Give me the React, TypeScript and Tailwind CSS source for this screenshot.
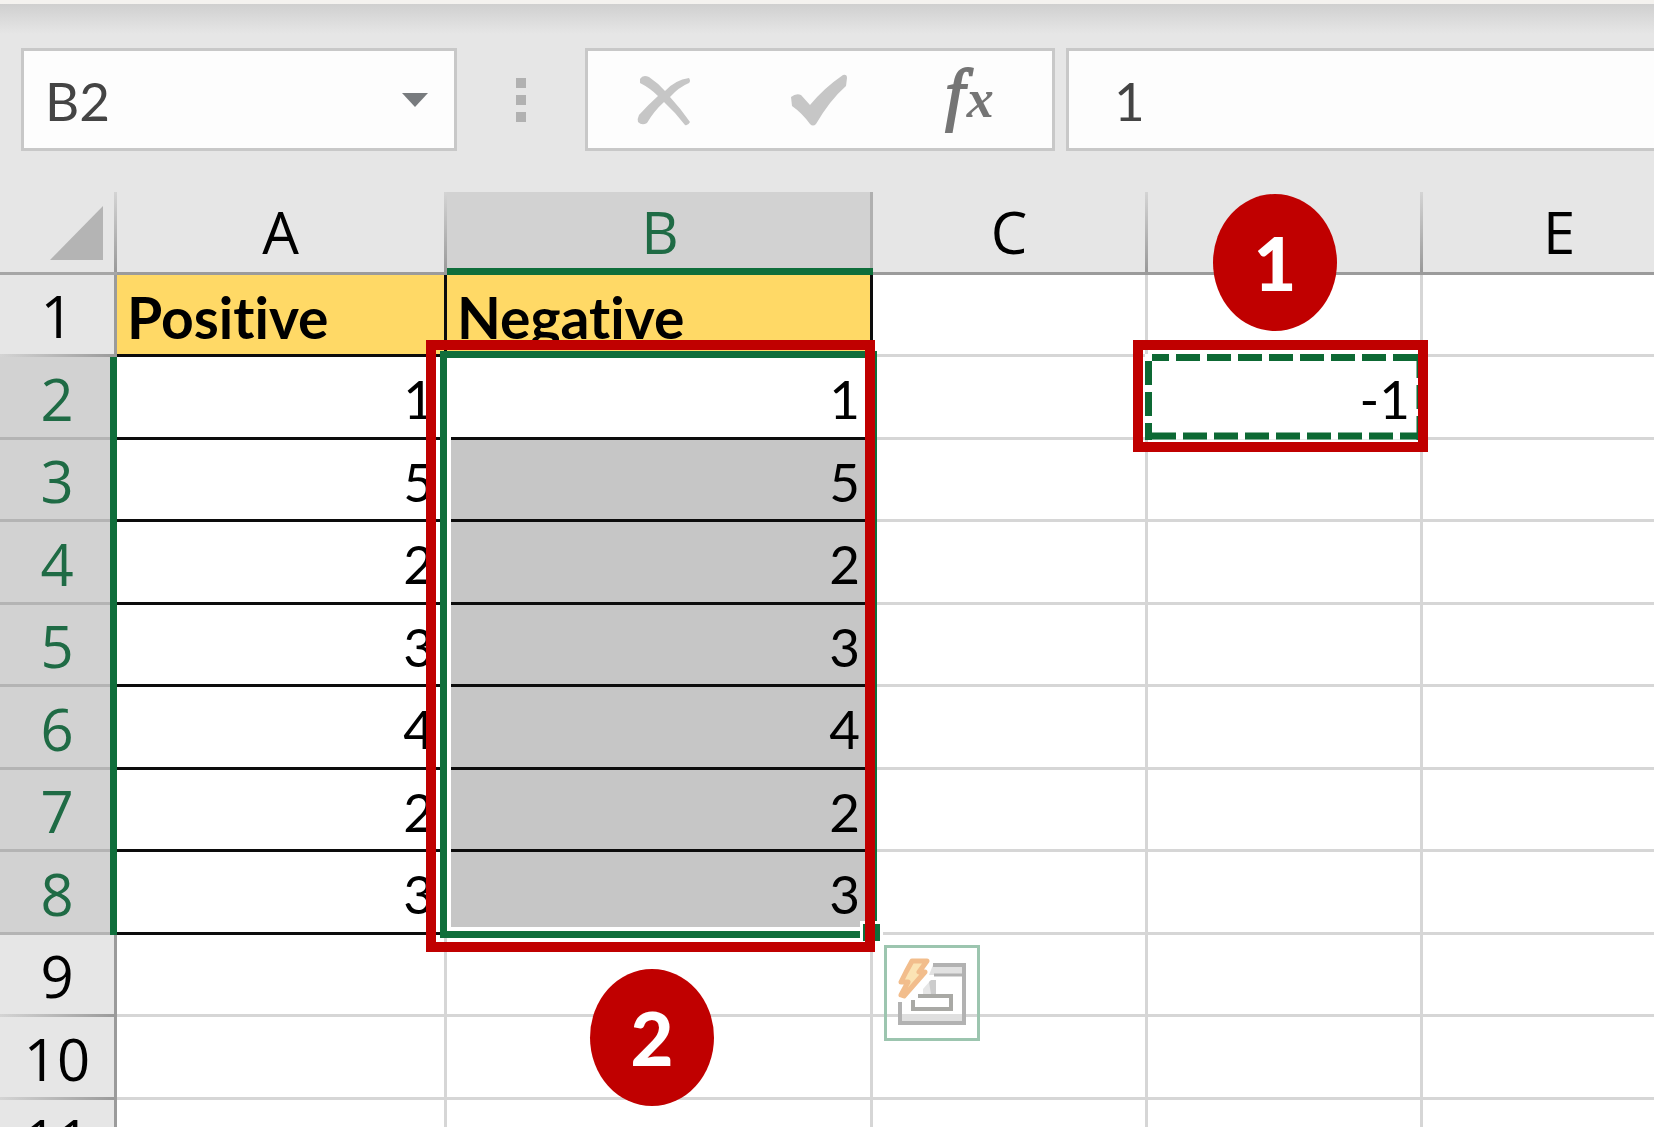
import clsx from "clsx";

const columns = ["A", "B", "C", "D", "E"];
const positive = [1, 5, 2, 3, 4, 2, 3];
const rows = Array.from({ length: 10 }, (_, i) => i + 1);

const isSelected = (row: number) => row >= 2 && row <= 8;

const FormulaBar = () => {
  return (
    <form className="flex h-[188px] bg-[linear-gradient(#cfcfcf,#dadada_14px,#e6e6e6_30px)] pt-[44px] pb-[41px] pl-[21px] font-[Lato,sans-serif] text-[53px] text-[#444]">
      <div className="flex w-[436px] shrink-0 items-center border-[3px] border-[#c8c8c8] bg-[#fdfdfd]">
        <input
          aria-label="Name box"
          defaultValue="B2"
          className="h-full w-full min-w-0 flex-1 bg-transparent pt-[2px] pl-[21px] outline-none"
        />
        <button type="button" aria-label="Open name list" className="mr-[26px]">
          <svg width="26" height="14" viewBox="0 0 26 14" fill="#787b7e">
            <path d="M0 0H26L13 14Z" />
          </svg>
        </button>
      </div>

      <div className="flex w-[128px] shrink-0 flex-col items-center justify-center gap-[7px]">
        <span className="size-[10px] bg-[#b1b1b1]" />
        <span className="size-[10px] bg-[#b1b1b1]" />
        <span className="size-[10px] bg-[#b1b1b1]" />
      </div>

      <div className="flex w-[470px] shrink-0 border-[3px] border-[#c8c8c8] bg-[#fdfdfd] pr-[3px]">
        <button type="button" aria-label="Cancel" className="flex flex-1 items-center justify-center pr-[4px]">
          <svg width="54" height="52" viewBox="0 0 54 52" fill="#c6c6c6">
            <path d="M3 5Q6 0 12 3Q21 9 28 17Q38 6 52 4Q54 7 52 9Q42 13 33 23Q44 35 53 48Q51 52 48 51Q38 38 27 28Q17 37 10 49Q5 52 1 48Q0 45 2 41Q12 30 21 22Q13 14 3 9Z" />
          </svg>
        </button>
        <button type="button" aria-label="Enter" className="flex flex-1 items-center justify-center">
          <svg width="58" height="52" viewBox="0 0 58 52" fill="#c6c6c6">
            <path d="M1 23Q6 19 11 21L20 31Q34 14 53 1Q57 0 57 4L56 12Q40 26 26 50Q23 53 20 50Q12 39 2 32Z" />
          </svg>
        </button>
        <button
          type="button"
          aria-label="Insert function"
          className="flex flex-1 items-baseline justify-center gap-[2px] pt-[3px] pr-[4px] font-['Liberation_Serif',serif] text-[#757575] italic"
        >
          <span className="text-[70px] leading-[80px] [-webkit-text-stroke:2px_#757575]">f</span>
          <span className="text-[54px] leading-[80px] font-bold">x</span>
        </button>
      </div>

      <input
        aria-label="Formula"
        defaultValue="1"
        className="ml-[11px] min-w-0 flex-1 border-y-[3px] border-l-[3px] border-[#c8c8c8] bg-[#fdfdfd] pt-[2px] pl-[45px] outline-none"
      />
    </form>
  );
};

const RowHeader = ({ row }: { row: number }) => (
  <th
    scope="row"
    className={clsx(
      "pr-[3px] text-center font-['Open_Sans',sans-serif] text-[58px] leading-[60px] font-normal",
      isSelected(row)
        ? "bg-[#d2d2d2] text-[#1f6b45] shadow-[inset_-7px_0_#0f6e3b,inset_0_-3px_#b4b4b4]"
        : "bg-[#e6e6e6] bg-[linear-gradient(to_right,#d4d4d4,#999)] bg-[length:100%_3px] bg-bottom bg-no-repeat text-black shadow-[inset_-3px_0_#9b9b9b]"
    )}
  >
    {row}
  </th>
);

const Cell = ({ row, column }: { row: number; column: string }) => {
  const inTable = row <= 8 && (column === "A" || column === "B");
  let value: string | number = "";

  if (row === 1 && column === "A") value = "Positive";
  if (row === 1 && column === "B") value = "Negative";
  if (row > 1 && inTable) value = positive[row - 2];
  if (row === 2 && column === "D") value = "-1";

  return (
    <td
      className={clsx(
        "border-r-[3px] border-b-[3px] pt-[4px] leading-[60px] [font-variant-ligatures:none]",
        inTable ? "border-[#0c0c0c]" : "border-[#d6d6d6]",
        row === 1 && inTable && "bg-[#ffd966]",
        row === 1 ? "pl-[10px] text-left text-[57px] font-bold" : "pr-[10px] text-right",
        column === "B" && row > 2 && row <= 8 && "bg-[#c6c6c6]"
      )}
    >
      {value}
    </td>
  );
};

const Grid = () => {
  return (
    <table className="w-[1698px] table-fixed border-separate border-spacing-0 font-[Lato,sans-serif] text-[53px] text-black">
      <colgroup>
        <col className="w-[117px]" />
        <col className="w-[330px]" />
        <col className="w-[426px]" />
        <col className="w-[275px]" />
        <col className="w-[275px]" />
        <col className="w-[275px]" />
      </colgroup>
      <thead>
        <tr className="h-[83px] font-['Open_Sans',sans-serif] text-[58px] leading-[60px]">
          <td className="border-b-[3px] border-[#a6a6a6] bg-[#e6e6e6] bg-[linear-gradient(#d4d4d4,#999)] bg-[length:3px_100%] bg-right bg-no-repeat">
            <svg className="mt-[2px] ml-[50px]" width="53" height="54" viewBox="0 0 53 54" fill="#b4b4b4">
              <path d="M53 0V54H0Z" />
            </svg>
          </td>
          {columns.map((column) => (
            <th
              key={column}
              scope="col"
              aria-label={`Column ${column}`}
              className={clsx(
                "font-normal",
                column === "B"
                  ? "bg-[#d2d2d2] pb-[3px] text-[#1f6b45] shadow-[inset_0_-7px_#0f6e3b,inset_-3px_0_#b0b0b0]"
                  : "border-b-[3px] border-[#9b9b9b] bg-[#e6e6e6] bg-[linear-gradient(#d4d4d4,#999)] bg-[length:3px_100%] bg-right bg-no-repeat pr-[3px]"
              )}
            >
              {/* the first callout sits on top of this heading */}
              {column === "D" ? null : column}
            </th>
          ))}
        </tr>
      </thead>
      <tbody>
        {rows.map((row) => (
          <tr key={row} className="h-[82px] even:h-[83px]">
            <RowHeader row={row} />
            {columns.map((column) => (
              <Cell key={column} row={row} column={column} />
            ))}
          </tr>
        ))}
        {/* last row is cut off by the bottom of the sheet */}
        <tr>
          <th
            scope="row"
            className="bg-[#e6e6e6] pr-[3px] font-['Open_Sans',sans-serif] text-[58px] font-normal shadow-[inset_-3px_0_#9b9b9b]"
          >
            <div className="h-[27px] overflow-hidden leading-[80px]">11</div>
          </th>
          {columns.map((column) => (
            <td key={column} className="border-r-[3px] border-[#d6d6d6]" />
          ))}
        </tr>
      </tbody>
    </table>
  );
};

const Selection = () => (
  <>
    <div className="pointer-events-none absolute top-[159px] left-[440px] h-[587px] w-[437px] border-[7px] border-[#0f6e3b] shadow-[inset_0_0_0_4px_#fff]" />
    <div className="absolute top-[729px] left-[860px] size-[23px] border-[3px] border-white bg-[#0f6e3b]" />
  </>
);

const CopyOutline = () => (
  <div className="pointer-events-none absolute top-[148px] left-[1133px] h-[112px] w-[295px] border-[10px] border-[#c00000]">
    <svg width="275" height="92" viewBox="0 0 275 92" fill="none" strokeWidth="7">
      <path stroke="#fff" d="M5.5 7.5H277V86H5.5Z" />
      <g stroke="#0d6934" strokeDasharray="24 7">
        <path d="M9 7.5H275" strokeDashoffset="7" />
        <path d="M9 86H275" />
        <path d="M5.5 11V90" />
        <path d="M277 4V90" />
      </g>
    </svg>
  </div>
);

const QuickAnalysis = () => (
  <button
    type="button"
    aria-label="Quick analysis"
    className="absolute top-[753px] left-[884px] size-[96px] border-[3px] border-[#9cc5af]"
  >
    <svg width="90" height="90" viewBox="0 0 90 90" fill="none">
      <path fill="#fff" d="M11 10H79V76H11Z" />
      <path fill="#e2e2e2" d="M46 17H77V27H42Z" />
      <path fill="#e0e0e0" d="M13 66H77V76H13Z" />
      <path stroke="#b2b2b2" strokeWidth="4" d="M46 17H77V75H13V54" />
      <path stroke="#b2b2b2" strokeWidth="3" d="M47 27H77" />
      <path fill="#e6e6e6" d="M36 41L43 33H45V46H36Z" />
      <path fill="#cccccc" d="M42 34L44 32H49V46H44Z" />
      <path stroke="#a9a9a5" strokeWidth="4" d="M31 48H64V61H26V52" />
      <path
        fill="#fbe3b4"
        stroke="#f2bd8c"
        strokeWidth="5"
        strokeLinejoin="round"
        d="M25 13H40L32 24H38L17 48L14 47L21 34H14L19 24Z"
      />
    </svg>
  </button>
);

const App = () => {
  return (
    <main className="w-full overflow-hidden bg-white">
      <div className="h-1 bg-[#f4f2ef]" />
      <FormulaBar />
      <section className="relative">
        <Grid />
        <Selection />
        <QuickAnalysis />
        <div className="pointer-events-none absolute top-[148px] left-[426px] h-[612px] w-[449px] border-[10px] border-[#c00000]" />
        <CopyOutline />
        <span className="absolute top-[2px] left-[1213px] flex h-[137px] w-[124px] items-center justify-center rounded-[50%] bg-[#c00000] font-[Lato,sans-serif] text-[74px] font-black text-white">
          1
        </span>
        <span className="absolute top-[777px] left-[590px] flex h-[137px] w-[124px] items-center justify-center rounded-[50%] bg-[#c00000] font-[Lato,sans-serif] text-[74px] font-black text-white">
          2
        </span>
      </section>
    </main>
  );
};

export default App;
